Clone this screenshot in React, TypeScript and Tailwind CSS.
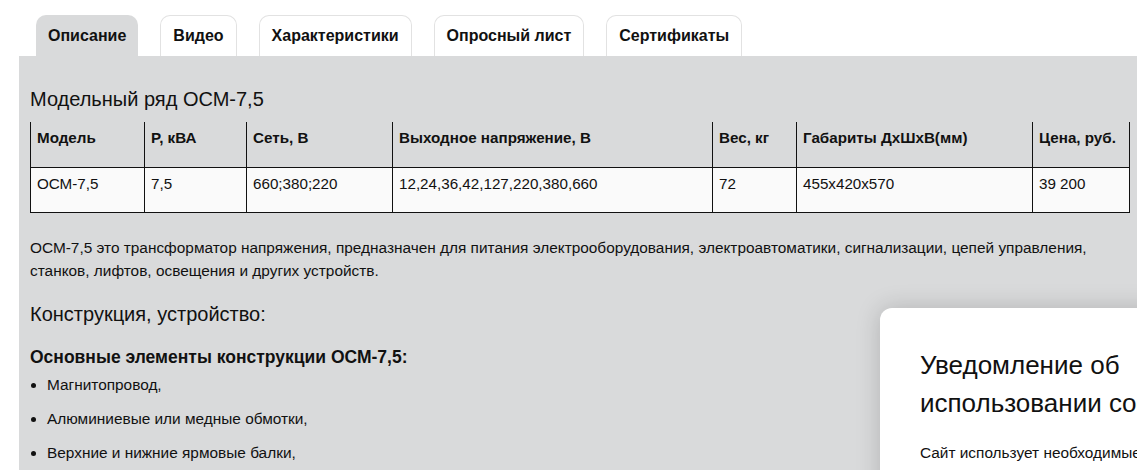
import React from "react";

const tabs = ["Описание", "Видео", "Характеристики", "Опросный лист", "Сертификаты"];

const cols = [
  { title: "Модель", w: 114, val: "ОСМ-7,5" },
  { title: "P, кВА", w: 102, val: "7,5" },
  { title: "Сеть, В", w: 146, val: "660;380;220" },
  { title: "Выходное напряжение, В", w: 320, val: "12,24,36,42,127,220,380,660" },
  { title: "Вес, кг", w: 84, val: "72" },
  { title: "Габариты ДхШхВ(мм)", w: 236, val: "455x420x570" },
  { title: "Цена, руб.", w: 97, val: "39 200" },
];

const parts = ["Магнитопровод,", "Алюминиевые или медные обмотки,", "Верхние и нижние ярмовые балки,"];

export default function App() {
  return (
    <div
      className="relative h-[470px] w-[1137px] overflow-hidden bg-white text-[#111]"
      style={{ fontFamily: '"Liberation Sans", Arial, sans-serif' }}
    >
      {/* tabs */}
      <div className="flex gap-[22px] pl-[36px] pt-[15px]">
        {tabs.map((t, i) => (
          <div
            key={t}
            className={
              i === 0
                ? "flex h-[41px] items-center rounded-t-[10px] bg-[#d9dadb] px-3 text-[16px] font-bold"
                : "flex h-[41px] items-center rounded-t-[10px] border border-b-0 border-[#e2e2e2] bg-white px-3 text-[16px] font-bold"
            }
          >
            {t}
          </div>
        ))}
      </div>

      {/* panel */}
      <div className="ml-[19px] w-[1121px] bg-[#d9dadb] px-[11px] pt-[31px] pb-10">
        <h2 className="text-[20px] leading-[24px]">Модельный ряд ОСМ-7,5</h2>

        <table className="mt-[11px] w-[1099px] table-fixed border-collapse text-[15.2px]">
          <colgroup>
            {cols.map((c) => (
              <col key={c.title} style={{ width: c.w }} />
            ))}
          </colgroup>
          <thead>
            <tr>
              {cols.map((c) => (
                <th
                  key={c.title}
                  className="h-[45px] border-x border-b border-[#111] px-[6px] pt-[6px] text-left align-top font-bold leading-[20px]"
                >
                  {c.title}
                </th>
              ))}
            </tr>
          </thead>
          <tbody>
            <tr className="bg-[#fafafa]">
              {cols.map((c) => (
                <td
                  key={c.title}
                  className="h-[45px] border-x border-b border-[#111] px-[6px] pt-[6px] align-top leading-[20px]"
                >
                  {c.val}
                </td>
              ))}
            </tr>
          </tbody>
        </table>

        <p className="mt-[23px] text-[15.4px] leading-[23px]">
          ОСМ-7,5 это трансформатор напряжения, предназначен для питания электрооборудования, электроавтоматики,
          сигнализации, цепей управления, станков, лифтов, освещения и других устройств.
        </p>

        <h3 className="mt-[18px] text-[20px] leading-[28px]">Конструкция, устройство:</h3>

        <h4 className="mt-[17px] text-[17.5px] font-bold leading-[24px]">Основные элементы конструкции ОСМ-7,5:</h4>

        <ul className="mt-[5px] pl-[17px] text-[15.4px] leading-[22px]">
          {parts.map((p) => (
            <li key={p} className="mb-[12px] list-disc">
              {p}
            </li>
          ))}
        </ul>
      </div>

      {/* cookie notice */}
      <div className="absolute left-[880px] top-[308px] h-[300px] w-[520px] rounded-tl-[12px] bg-white px-[40px] pt-[38px] shadow-[0_0_24px_rgba(0,0,0,0.18)]">
        <div className="max-w-[340px] text-[26px] leading-[38px]">Уведомление об использовании cookie</div>
        <p className="mt-[18px] text-[15.4px] leading-[26px]">
          Сайт использует необходимые cookie-файлы для корректной работы сайта.
        </p>
      </div>
    </div>
  );
}
